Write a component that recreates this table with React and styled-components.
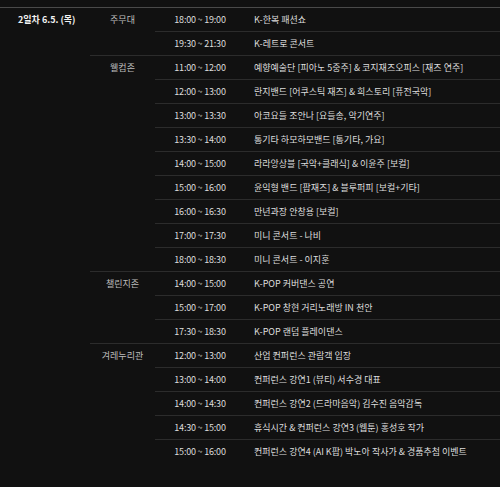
import styled, { createGlobalStyle } from 'styled-components';

const GlobalStyle = createGlobalStyle`
  html, body {
    margin: 0;
    padding: 0;
    background: #111111;
  }
  body {
    font-family: "Noto Sans CJK KR", "Noto Sans", sans-serif;
    color: #dcdcdc;
  }
`;

const schedule = [
  {
    venue: '주무대',
    items: [
      ['18:00 ~ 19:00', 'K-한복 패션쇼'],
      ['19:30 ~ 21:30', 'K-레트로 콘서트'],
    ],
  },
  {
    venue: '웰컴존',
    items: [
      ['11:00 ~ 12:00', '예향예술단 [피아노 5중주] & 코지재즈오피스 [재즈 연주]'],
      ['12:00 ~ 13:00', '란지밴드 [어쿠스틱 재즈] & 희스토리 [퓨전국악]'],
      ['13:00 ~ 13:30', '아코요들 조안나 [요들송, 악기연주]'],
      ['13:30 ~ 14:00', '통기타 하모하모밴드 [통기타, 가요]'],
      ['14:00 ~ 15:00', '라라앙상블 [국악+클래식] & 이윤주 [보컬]'],
      ['15:00 ~ 16:00', '윤익형 밴드 [팝재즈] & 블루퍼피 [보컬+기타]'],
      ['16:00 ~ 16:30', '만년과장 안창용 [보컬]'],
      ['17:00 ~ 17:30', '미니 콘서트 - 나비'],
      ['18:00 ~ 18:30', '미니 콘서트 - 이지훈'],
    ],
  },
  {
    venue: '챌린지존',
    items: [
      ['14:00 ~ 15:00', 'K-POP 커버댄스 공연'],
      ['15:00 ~ 17:00', 'K-POP 창현 거리노래방 IN 천안'],
      ['17:30 ~ 18:30', 'K-POP 랜덤 플레이댄스'],
    ],
  },
  {
    venue: '겨레누리관',
    items: [
      ['12:00 ~ 13:00', '산업 컨퍼런스 관람객 입장'],
      ['13:00 ~ 14:00', '컨퍼런스 강연1 (뷰티) 서수경 대표'],
      ['14:00 ~ 14:30', '컨퍼런스 강연2 (드라마음악) 김수진 음악감독'],
      ['14:30 ~ 15:00', '휴식시간 & 컨퍼런스 강연3 (웹툰) 홍성호 작가'],
      ['15:00 ~ 16:00', '컨퍼런스 강연4 (AI K팝) 박노아 작사가 & 경품추첨 이벤트'],
    ],
  },
];

function App() {
  return (
    <Page>
      <GlobalStyle />
      <DayBlock>
        <DateCell>2일차 6.5. (목)</DateCell>
        <Groups>
          {schedule.map((group) => (
            <Group key={group.venue}>
              <VenueCell>{group.venue}</VenueCell>
              <Items>
                {group.items.map(([time, title]) => (
                  <Item key={time + title}>
                    <TimeCell>{time}</TimeCell>
                    <TitleCell>{title}</TitleCell>
                  </Item>
                ))}
              </Items>
            </Group>
          ))}
        </Groups>
      </DayBlock>
    </Page>
  );
}

export default App;

const Page = styled.div`
  width: 500px;
  min-height: 487px;
  padding-top: 7px;
  box-sizing: border-box;
  background: #111111;
`;

const DayBlock = styled.div`
  display: flex;
  border-top: 1px solid #4a4a4a;
`;

const DateCell = styled.div`
  width: 90px;
  flex-shrink: 0;
  box-sizing: border-box;
  padding-left: 18px;
  height: 23px;
  line-height: 23px;
  font-size: 9px;
  font-weight: 700;
  color: #f2f2f2;
  white-space: nowrap;
`;

const Groups = styled.div`
  flex: 1;
  display: flex;
  flex-direction: column;
`;

const Group = styled.div`
  display: flex;
  & + & {
    border-top: 1px solid #2c2c2c;
  }
`;

const VenueCell = styled.div`
  width: 65px;
  flex-shrink: 0;
  height: 23px;
  line-height: 23px;
  text-align: center;
  font-size: 9px;
  color: #bdbdbd;
`;

const Items = styled.div`
  flex: 1;
  display: flex;
  flex-direction: column;
`;

const Item = styled.div`
  display: flex;
  height: 23px;
  align-items: center;
  & + & {
    border-top: 1px solid #2c2c2c;
  }
`;

const TimeCell = styled.div`
  width: 90px;
  flex-shrink: 0;
  text-align: center;
  font-size: 9px;
  color: #dedede;
  letter-spacing: -0.2px;
`;

const TitleCell = styled.div`
  padding-left: 9px;
  font-size: 9px;
  color: #dedede;
  white-space: nowrap;
`;
